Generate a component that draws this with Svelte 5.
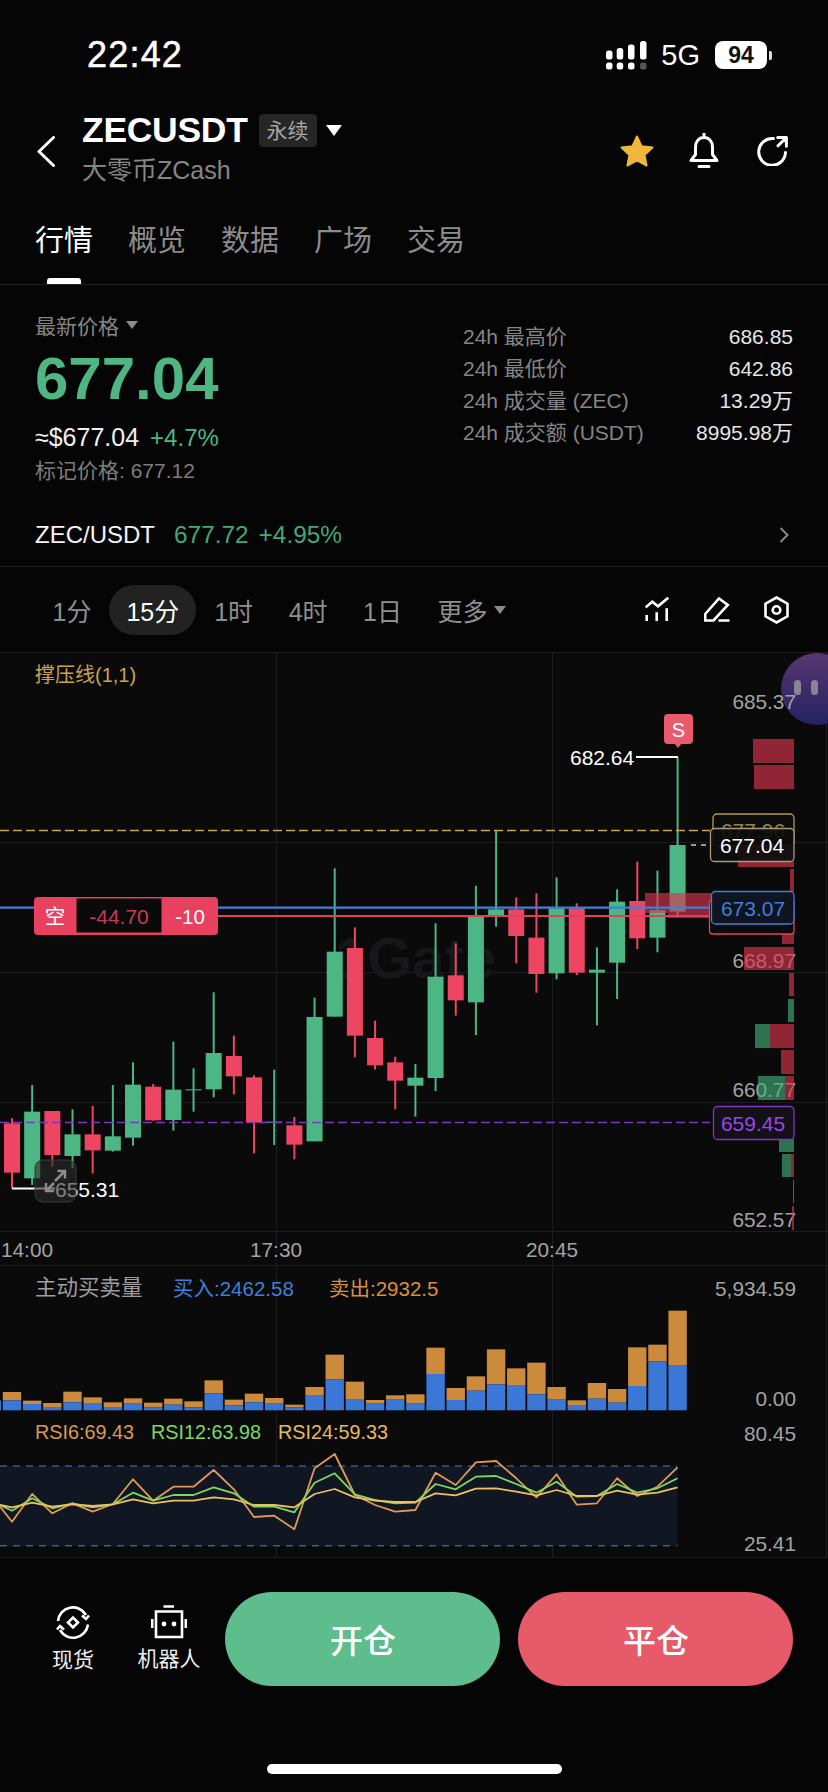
<script>
  const tabs = ['行情', '概览', '数据', '广场', '交易'];
  const stats = [
    ['24h 最高价', '686.85'],
    ['24h 最低价', '642.86'],
    ['24h 成交量 (ZEC)', '13.29万'],
    ['24h 成交额 (USDT)', '8995.98万']
  ];
  const frames = ['1分', '15分', '1时', '4时', '1日'];
  const cx = (i) => 12 + 20.17 * i;

  // wick top, wick bottom, body top, body bottom, rising
  const candleData = [
    [595,805,610,758,0],[495,795,575,775,1],[573,740,573,705,0],[568,745,643,708,1],
    [558,760,643,691,0],[495,695,649,692,1],[427,677,494,653,1],[492,602,500,601,0],
    [365,632,509,600,1],[445,575,508,511,1],[217,532,399,508,1],[347,523,408,469,0],
    [466,700,472,608,0],[449,675,605,608,1],[591,718,616,674,0],[233,664,291,664,1],
    [-155,290,95,290,1],[22,412,84,347,0],[302,449,354,436,0],[410,568,427,482,0],
    [432,590,473,497,1],[10,513,170,474,1],[70,287,166,241,0],[-103,345,-10,247,1],
    [-269,20,-32,-13,1],[-68,130,-32,48,0],[-80,218,53,162,0],[-128,178,-35,160,1],
    [-50,165,-35,158,0],[82,316,149,158,1],[-92,237,-55,128,1],[-175,87,-57,55,0],
    [-148,97,-30,53,1],[-488,-15,-225,-25,1]
  ];
  const py = (v) => 920 + v / 3;
  const candles = candleData.map((c, i) => ({
    x: cx(i),
    wt: py(c[0]),
    wb: py(c[1]),
    bt: py(c[2]),
    bh: Math.max(1, (c[3] - c[2]) / 3),
    cls: c[4] ? 'up' : 'down'
  }));

  // sell top, buy top
  const volumeData = [
    [396,421],[422,432],[429,441],[395,427],[412,429],[427,441],[415,431],[428,442],[416,434],
    [424,442],[361,400],[419,436],[401,427],[414,431],[434,442],[381,405],[284,358],[365,417],
    [420,431],[406,419],[403,431],[263,342],[384,420],[349,392],[268,373],[325,375],[308,403],
    [381,419],[421,435],[369,416],[387,428],[262,378],[254,304],[152,315]
  ];
  const vy = (v) => 1260 + v / 3;
  const volumes = volumeData.map((v, i) => ({ x: cx(i) - 9.2, sell: vy(v[0]), buy: vy(v[1]) }));

  const toLine = (first, rest) =>
    `0,${vy(first)} ` + rest.map((v, i) => `${cx(i).toFixed(1)},${vy(v).toFixed(1)}`).join(' ');
  const rsi6 = toLine(740, [785,702,760,730,755,732,658,722,680,680,630,688,771,767,808,625,582,705,735,755,750,638,675,607,603,655,712,643,734,730,655,708,680,622]);
  const rsi12 = toLine(735, [752,715,745,730,742,733,698,722,705,705,682,700,740,740,757,668,640,703,720,730,728,672,688,650,648,672,698,665,710,708,672,698,685,655]);
  const rsi24 = toLine(735, [742,728,740,733,738,733,718,730,722,722,712,718,735,735,742,702,687,712,722,726,726,700,706,686,685,695,706,690,708,708,692,704,698,682]);

  // y, height, left edge, split (green to the left of it), right edge
  const depth = [
    [739,24,753,753],[765,24,754,754],[847,20,738,738],[869,23,790,790],[893,20,645,645],[913,5,668,668],
    [920,24,782,782],[947,23,744,744],[973,23,789,789],[999,23,788,794],[1024,24,755,770],
    [1050,24,781,781],[1076,24,758,785],[1139,13,779,794],[1154,23,782,791],[1180,23,793,794],[1206,24,792,792]
  ];
</script>

<div class="page">
  <div class="status">
    <span class="clock">22:42</span>
    <div class="status-right">
      <svg class="signal" width="41" height="29" viewBox="0 0 41 29">
        <rect x="0" y="9.5" width="6.5" height="9" rx="2.5" />
        <rect x="10.7" y="7" width="6.5" height="11.5" rx="2.5" />
        <rect x="22" y="3.5" width="6.5" height="15" rx="2.5" />
        <rect x="34" y="0" width="6.5" height="18.5" rx="2.5" />
        <rect x="0" y="21.5" width="6.5" height="7" rx="2.5" />
        <rect x="10.7" y="21.5" width="6.5" height="7" rx="2.5" />
        <rect x="22" y="21.5" width="6.5" height="7" rx="2.5" />
        <rect class="dim" x="34" y="21.5" width="6.5" height="7" rx="2.5" />
      </svg>
      <span class="net">5G</span>
      <span class="battery">94</span>
      <span class="nub"></span>
    </div>
  </div>

  <div class="nav">
    <svg class="back" width="18" height="31" viewBox="0 0 18 31">
      <path d="M16.5 1.5 L2 15.5 L16.5 29.5" />
    </svg>
    <div class="title">
      <div class="title-row">
        <span class="symbol">ZECUSDT</span>
        <span class="badge">永续</span>
        <span class="tri big"></span>
      </div>
      <div class="sub">大零币ZCash</div>
    </div>
    <div class="nav-icons">
      <svg class="fav" width="36" height="34" viewBox="0 0 36 34">
        <path class="star" d="M18 2.5 L22.6 12.3 L33.5 13.6 L25.5 21 L27.6 31.5 L18 26.3 L8.4 31.5 L10.5 21 L2.5 13.6 L13.4 12.3 Z" />
      </svg>
      <svg class="ic bell" width="30" height="36" viewBox="0 0 30 36">
        <path d="M15 4.5 C9.5 4.5 6.5 9 6.5 14 V21.5 L2 27.5 H28 L23.5 21.5 V14 C23.5 9 20.5 4.5 15 4.5 Z M15 .5 V4.5 M10 33.5 H20" />
      </svg>
      <svg class="ic" width="31" height="30" viewBox="0 0 31 30">
        <path d="M16.5 2.6 A13.4 13.4 0 1 0 28.5 16.5 M21 9.8 L29.4 1.5 M20.7 1.5 H29.4 V10.3" />
      </svg>
    </div>
  </div>

  <div class="tabs">
    {#each tabs as tab, i}
      <div class="tab" class:active={i === 0}>{tab}</div>
    {/each}
  </div>

  <section class="stats">
    <div class="stats-top">
      <div class="price-col">
        <div class="latest"><span>最新价格</span><span class="tri small"></span></div>
        <div class="price">677.04</div>
        <div class="approx">≈$677.04<span class="green">+4.7%</span></div>
        <div class="mark">标记价格: 677.12</div>
      </div>
      <div class="stat-col">
        {#each stats as [label, value]}
          <div class="stat"><span class="stat-label">{label}</span><span class="stat-value">{value}</span></div>
        {/each}
      </div>
    </div>
    <div class="pair">
      <span class="pair-name">ZEC/USDT</span>
      <span class="pair-green">677.72</span>
      <span class="pair-green">+4.95%</span>
      <svg class="more" width="10" height="16" viewBox="0 0 10 16"><path d="M1.5 1 L8.5 8 L1.5 15" /></svg>
    </div>
  </section>

  <div class="frames">
    {#each frames as f, i}
      <span class="frame" class:on={i === 1}>{f}</span>
    {/each}
    <span class="frame last">更多<span class="tri small"></span></span>
    <div class="tools">
      <svg class="ic thin" width="25" height="25" viewBox="0 0 25 25">
        <path d="M.7 10.3 L7.3 4.7 L13 9.3 L23.3 .7 M1.7 18 V24 M11.7 15.3 V24 M21.7 11.3 V24" />
      </svg>
      <svg class="ic thin" width="26" height="25" viewBox="0 0 26 25">
        <path d="M1.2 23.5 V17 L15 1.5 L23.8 8 L9.5 23.5 Z M14.5 23.5 H25.5" />
      </svg>
      <svg class="ic thin" width="25" height="28" viewBox="0 0 25 28">
        <path d="M12.5 1.5 L23.5 7.7 V20.3 L12.5 26.5 L1.5 20.3 V7.7 Z" />
        <circle cx="12.5" cy="14" r="3.8" />
      </svg>
    </div>
  </div>

  <svg class="chart" width="828" height="906" viewBox="0 652 828 906">
    <defs>
      <linearGradient id="blob" x1="0" y1="0" x2="0" y2="1">
        <stop offset="0" stop-color="#5d3a78" />
        <stop offset="1" stop-color="#25256a" />
      </linearGradient>
    </defs>

    <!-- grid -->
    {#each [652.5, 842.5, 972.5, 1102.5, 1231.5, 1265.5, 1557.5] as y}
      <line class="grid" x1="0" x2="828" y1={y} y2={y} />
    {/each}
    {#each [276.5, 552.5, 826.5] as x}
      <line class="grid" x1={x} x2={x} y1="652" y2="1558" />
    {/each}
    <text class="mark-w" x="335" y="978">1Gate</text>

    <text class="legend" x="35" y="675">撑压线(1,1)</text>

    <!-- floating assistant -->
    <circle cx="817" cy="689" r="36" fill="url(#blob)" opacity="0.93" />
    <rect class="pill" x="794" y="680" width="7" height="15" rx="3.5" />
    <rect class="pill" x="811" y="680" width="7" height="15" rx="3.5" />

    <!-- price axis -->
    <text class="ax" x="796" y="701">685.37</text>
    <text class="ax" x="796" y="960">668.97</text>
    <text class="ax" x="796" y="1089">660.77</text>
    <text class="ax" x="796" y="1219">652.57</text>

    <!-- candles -->
    {#each candles as c}
      <line class={'wick ' + c.cls} x1={c.x} x2={c.x} y1={c.wt} y2={c.wb} />
      <rect class={'body ' + c.cls} x={c.x - 8} y={c.bt} width="16" height={c.bh} />
    {/each}

    <!-- depth -->
    {#each depth as d}
      {#if d[3] > d[2]}
        <rect class="dg" x={d[2]} y={d[0]} width={d[3] - d[2]} height={d[1]} />
      {/if}
      {#if d[3] < 794}
        <rect class="dr" x={d[3]} y={d[0]} width={794 - d[3]} height={d[1]} />
      {/if}
    {/each}

    <!-- level lines -->
    <line class="lv-y" x1="0" x2="710" y1="830.5" y2="830.5" />
    <line class="lv-p" x1="0" x2="710" y1="1122.5" y2="1122.5" />
    <line class="lv-b" x1="0" x2="712" y1="907.7" y2="907.7" />
    <line class="lv-r" x1="218" x2="712" y1="916" y2="916" />
    <line class="lv-w" x1="691" x2="710" y1="845" y2="845" />

    <!-- high and low marks -->
    <path class="mk" d="M636 757 H678" />
    <text class="mk-t" x="570" y="757">682.64</text>
    <path class="mk" d="M12 1188.5 H55" />
    <text class="mk-t" x="55" y="1189">655.31</text>
    <rect class="sig" x="664" y="714" width="29" height="30" rx="4" />
    <path class="sig" d="M674 743 L678 748 L682 743 Z" />
    <text class="sig-t" x="678.5" y="729.5">S</text>

    <!-- position tag -->
    <rect class="pos" x="34" y="897" width="184" height="38" rx="4" />
    <rect class="pos-in" x="76.5" y="898.5" width="85" height="34" />
    <text class="pos-t" x="55" y="916">空</text>
    <text class="pos-v" x="119" y="916">-44.70</text>
    <text class="pos-t" x="190" y="916">-10</text>

    <!-- price tags -->
    <rect class="tag tag-y" x="713" y="814" width="81" height="32" rx="4" />
    <text class="tag-t ty" x="753" y="830">677.96</text>
    <rect class="tag tag-w" x="710.5" y="828.5" width="83.5" height="33" rx="4" />
    <text class="tag-t tw" x="752" y="845">677.04</text>
    <rect class="tag tag-r" x="709.5" y="900" width="84.5" height="34" rx="3" />
    <rect class="tag tag-b" x="711.5" y="891.5" width="82.5" height="32.5" rx="4" />
    <text class="tag-t tb" x="753" y="908">673.07</text>
    <rect class="tag tag-p" x="713.5" y="1106.5" width="80.5" height="33" rx="4" />
    <text class="tag-t tp" x="753" y="1123">659.45</text>

    <!-- time axis -->
    <text class="ax mid" x="27" y="1249">14:00</text>
    <text class="ax mid" x="276" y="1249">17:30</text>
    <text class="ax mid" x="552" y="1249">20:45</text>

    <!-- expand button -->
    <rect class="exp" x="35" y="1160" width="41" height="42" rx="8" />
    <path class="exp-a" d="M55 1181 L64 1172 M57.5 1171 H65 V1178.5 M54 1183 L47 1190 M46 1183 V1191 H54" />

    <!-- volume -->
    <text class="vh wh" x="35" y="1288">主动买卖量</text>
    <text class="vh blue" x="173" y="1288">买入:2462.58</text>
    <text class="vh orange" x="329" y="1288">卖出:2932.5</text>
    <text class="ax" x="796" y="1288">5,934.59</text>
    <text class="ax" x="796" y="1398">0.00</text>
    <rect class="bb" x="0" y="1400.5" width="1" height="10" />
    {#each volumes as v}
      <rect class="bs" x={v.x} y={v.sell} width="18.4" height={v.buy - v.sell} />
      <rect class="bb" x={v.x} y={v.buy} width="18.4" height={1410.3 - v.buy} />
    {/each}

    <!-- RSI -->
    <text class="rh r6" x="35" y="1432">RSI6:69.43</text>
    <text class="rh r12" x="151" y="1432">RSI12:63.98</text>
    <text class="rh r24" x="278" y="1432">RSI24:59.33</text>
    <text class="ax" x="796" y="1433">80.45</text>
    <text class="ax" x="796" y="1543">25.41</text>
    <rect class="band" x="0" y="1466" width="677.5" height="80" />
    <line class="band-l" x1="0" x2="677" y1="1466" y2="1466" />
    <line class="band-l" x1="0" x2="677" y1="1545.7" y2="1545.7" />
    <polyline class="ln r6l" points={rsi6} />
    <polyline class="ln r12l" points={rsi12} />
    <polyline class="ln r24l" points={rsi24} />
  </svg>

  <div class="footer">
    <div class="actions">
      <div class="act">
        <svg class="ic thin" width="36" height="35" viewBox="0 0 36 35">
          <path d="M3 16 A15 15 0 0 1 31 10 M34 10.5 L31 14 L27 10.5 M33 19.5 A15 15 0 0 1 5 25 M2 24.5 L5 21 L9 24.5" />
          <path d="M18 12.5 L23 17.5 L18 22.5 L13 17.5 Z" />
        </svg>
        <span>现货</span>
      </div>
      <div class="act">
        <svg class="ic thin" width="36" height="34" viewBox="0 0 36 34">
          <path d="M12.5 1.5 H23 M5 6.5 H31 V32 H5 Z M1.2 14 V23 M34.8 14 V23" />
          <circle class="eye" cx="13" cy="19" r="2.4" />
          <circle class="eye" cx="23" cy="19" r="2.4" />
        </svg>
        <span>机器人</span>
      </div>
    </div>
    <div class="btn open">开仓</div>
    <div class="btn close">平仓</div>
  </div>
  <div class="home"></div>
</div>

<style>
  :global(body) {
    margin: 0;
    background: #050505;
  }
  .page {
    width: 828px;
    height: 1792px;
    overflow: hidden;
    background: #050505;
    color: #fff;
    font-family: "Liberation Sans", "Noto Sans CJK SC", sans-serif;
  }
  svg {
    display: block;
    flex: none;
  }

  .status {
    height: 110px;
    display: flex;
    align-items: center;
    justify-content: space-between;
    padding: 0 56px 0 87px;
    box-sizing: border-box;
  }
  .clock {
    font-size: 36px;
    font-weight: 500;
    letter-spacing: 1.2px;
    -webkit-text-stroke: 0.5px #fff;
  }
  .status-right {
    display: flex;
    align-items: center;
  }
  .signal rect { fill: #fff; }
  .signal .dim { fill: #555; }
  .net {
    font-size: 29px;
    margin: 0 15px 0 14px;
  }
  .battery {
    width: 52px;
    height: 28px;
    background: #fff;
    color: #111;
    border-radius: 8px;
    font-size: 23px;
    font-weight: 700;
    line-height: 28px;
    text-align: center;
  }
  .nub {
    width: 3px;
    height: 9px;
    margin-left: 2px;
    background: #ddd;
    border-radius: 0 2px 2px 0;
  }

  .nav {
    height: 82px;
    display: flex;
    align-items: center;
    padding: 0 40px 0 37px;
  }
  .back path {
    fill: none;
    stroke: #fff;
    stroke-width: 3;
    stroke-linecap: round;
    stroke-linejoin: round;
  }
  .title {
    margin-left: 27px;
    align-self: flex-start;
    padding-top: 2px;
  }
  .title-row {
    display: flex;
    align-items: center;
    height: 36px;
  }
  .symbol {
    font-size: 35.5px;
    font-weight: 700;
    line-height: 36px;
    letter-spacing: -0.3px;
  }
  .badge {
    margin-left: 11px;
    width: 58px;
    height: 33px;
    background: #262626;
    border-radius: 4px;
    color: #a5a5a5;
    font-size: 21px;
    line-height: 33px;
    text-align: center;
  }
  .sub {
    margin-top: 7px;
    font-size: 25px;
    line-height: 30px;
    color: #858585;
  }
  .tri {
    display: inline-block;
    width: 0;
    height: 0;
    border-style: solid;
    border-color: #fff transparent transparent transparent;
  }
  .tri.big {
    margin-left: 9px;
    border-width: 11px 8px 0 8px;
  }
  .tri.small {
    margin-left: 7px;
    border-width: 8px 6px 0 6px;
    border-top-color: #8a8a8a;
  }
  .nav-icons {
    margin-left: auto;
    display: flex;
    align-items: center;
    gap: 38px;
  }
  .fav {
    margin-right: -4px;
  }
  .star {
    fill: #f0b63c;
    stroke: #f0b63c;
    stroke-width: 2;
    stroke-linejoin: round;
  }
  .ic path, .ic circle {
    fill: none;
    stroke: #fff;
    stroke-width: 3;
    stroke-linecap: round;
    stroke-linejoin: round;
  }
  .ic.thin path, .ic.thin circle {
    stroke-width: 2.6;
    stroke-linecap: butt;
    stroke-linejoin: miter;
  }
  .ic.thin .eye {
    fill: #fff;
    stroke: none;
  }

  .tabs {
    height: 93px;
    box-sizing: border-box;
    display: flex;
    gap: 35px;
    padding-left: 35px;
    border-bottom: 1px solid #222;
  }
  .tab {
    position: relative;
    padding-top: 35px;
    font-size: 29px;
    line-height: 29px;
    color: #8c8c8c;
  }
  .tab.active {
    color: #fff;
  }
  .tab.active::after {
    content: "";
    position: absolute;
    left: 12px;
    bottom: 0;
    width: 34px;
    height: 6px;
    background: #fff;
    border-radius: 3px 3px 0 0;
  }

  .stats {
    height: 282px;
    box-sizing: border-box;
    border-bottom: 1px solid #1e1e1e;
    padding: 0 35px;
  }
  .stats-top {
    display: flex;
    justify-content: space-between;
  }
  .price-col {
    padding-top: 28px;
  }
  .latest {
    display: flex;
    align-items: center;
    height: 24px;
    font-size: 21px;
    color: #868686;
  }
  .price {
    margin-top: 12px;
    font-size: 60px;
    font-weight: 700;
    line-height: 60px;
    color: #4fb583;
  }
  .approx {
    margin-top: 14px;
    font-size: 25px;
    line-height: 28px;
    color: #f0f0f0;
  }
  .green {
    margin-left: 11px;
    font-size: 24px;
    color: #4fb583;
  }
  .mark {
    margin-top: 6px;
    font-size: 21px;
    line-height: 26px;
    color: #7d7d7d;
  }
  .stat-col {
    width: 330px;
    padding-top: 36px;
  }
  .stat {
    display: flex;
    justify-content: space-between;
    height: 32px;
    line-height: 32px;
    font-size: 21px;
  }
  .stat-label { color: #858585; }
  .stat-value { color: #e6e6e6; }
  .pair {
    margin-top: 36px;
    display: flex;
    align-items: center;
    height: 30px;
    font-size: 24.4px;
  }
  .pair-name {
    font-size: 24px;
    margin-right: 19px;
    color: #f4f4f4;
  }
  .pair-green {
    color: #45a679;
    margin-right: 10px;
  }
  .more {
    margin-left: auto;
    margin-right: 4px;
  }
  .more path {
    fill: none;
    stroke: #888;
    stroke-width: 2;
  }

  .frames {
    height: 85px;
    display: flex;
    align-items: center;
    gap: 0.5px;
    padding: 0 39px 0 35px;
  }
  .frame {
    display: flex;
    align-items: center;
    justify-content: center;
    height: 50px;
    padding: 0 17.5px;
    font-size: 25px;
    color: #8f8f8f;
    border-radius: 25px;
  }
  .frame.on {
    padding: 0 17px;
    background: #222;
    color: #fff;
  }
  .tools {
    margin-left: auto;
    display: flex;
    align-items: center;
    gap: 34px;
  }

  .chart {
    background: #0a0a0b;
  }
  .chart text {
    dominant-baseline: central;
  }
  .grid {
    stroke: #1c1c1e;
    stroke-width: 1;
  }
  .chart .mark-w {
    dominant-baseline: alphabetic;
    font-size: 58px;
    font-weight: 700;
    fill: #171719;
  }
  .legend {
    font-size: 20px;
    fill: #c9a34e;
  }
  .ax {
    font-size: 20.8px;
    fill: #a3a3a3;
    text-anchor: end;
  }
  .ax.mid { text-anchor: middle; }
  .wick { stroke-width: 2; }
  .wick.up { stroke: #4cb784; }
  .wick.down { stroke: #ee4563; }
  .body.up { fill: #4cb784; }
  .body.down { fill: #ee4563; }
  .dr { fill: #d8344f; opacity: 0.65; }
  .dg { fill: #44b37c; opacity: 0.62; }
  .lv-y { stroke: #c9a34e; stroke-width: 1.5; stroke-dasharray: 9 4; }
  .lv-p { stroke: #7d35c4; stroke-width: 1.5; stroke-dasharray: 9 4; }
  .lv-b { stroke: #3f80d8; stroke-width: 2.2; }
  .lv-r { stroke: #e0405f; stroke-width: 2; }
  .lv-w { stroke: #ccc; stroke-width: 1.5; stroke-dasharray: 5 5; }
  .mk { fill: none; stroke: #fff; stroke-width: 1.8; }
  .mk-t {
    font-size: 21px;
    fill: #fff;
  }
  .sig { fill: #e85a6c; }
  .sig-t {
    font-size: 20px;
    fill: #fff;
    text-anchor: middle;
  }
  .pos { fill: #e8405f; }
  .pos-in { fill: #0a0a0b; }
  .pos-t {
    font-size: 20.5px;
    fill: #fff;
    text-anchor: middle;
  }
  .pos-v {
    font-size: 21px;
    fill: #c73a58;
    text-anchor: middle;
  }
  .tag { fill: #0c0c0d; stroke-width: 1.3; }
  .tag-y { stroke: #b39a55; }
  .tag-w { stroke: #a59c80; fill: #0d0d0d; fill-opacity: 0.92; }
  .tag-r { stroke: #e0405f; }
  .tag-b { stroke: #3f80d8; fill: #0e1420; }
  .tag-p { stroke: #7d35c4; fill: #141018; }
  .tag-t {
    font-size: 21px;
    text-anchor: middle;
  }
  .ty { fill: #9a8546; }
  .tw { fill: #fff; }
  .tb { fill: #3f80d8; }
  .tp { fill: #9a46ea; }
  .exp {
    fill: #2c2c2c;
    fill-opacity: 0.6;
    stroke: #3a3a3a;
    stroke-width: 1;
  }
  .exp-a {
    fill: none;
    stroke: #8c8c8c;
    stroke-width: 2.5;
  }
  .vh { font-size: 20.5px; }
  .wh { fill: #9e9e9e; font-size: 21.5px; }
  .blue { fill: #3f80d8; }
  .orange { fill: #d8903e; }
  .bs { fill: #cc8a3c; }
  .bb { fill: #3a77d6; }
  .rh { font-size: 19.8px; }
  .r6 { fill: #d89a50; }
  .r12 { fill: #7fd860; }
  .r24 { fill: #e6bb5c; }
  .band { fill: #101722; }
  .band-l {
    stroke: #3d5a88;
    stroke-width: 1.5;
    stroke-dasharray: 7 6;
  }
  .ln {
    fill: none;
    stroke-width: 1.8;
    stroke-linejoin: round;
  }
  .r6l { stroke: #e09a55; }
  .r12l { stroke: #7fd860; }
  .r24l { stroke: #f0c060; }
  .pill { fill: #8a8296; }

  .footer {
    height: 128px;
    box-sizing: border-box;
    padding: 34px 34px 0 38px;
    display: flex;
    align-items: flex-start;
    gap: 18px;
  }
  .actions {
    display: flex;
    gap: 26px;
    padding-top: 13px;
    margin-right: 3.4px;
  }
  .act {
    width: 70px;
    display: flex;
    flex-direction: column;
    align-items: center;
    gap: 7px;
    font-size: 21px;
    line-height: 26px;
    color: #eee;
  }
  .btn {
    width: 275px;
    height: 94px;
    border-radius: 47px;
    display: flex;
    align-items: center;
    justify-content: center;
    font-size: 33px;
    font-weight: 500;
    color: #fff;
  }
  .open { background: #5ebd8c; }
  .close { background: #e65a6a; }
  .home {
    width: 295px;
    height: 10px;
    margin: 78px auto 0;
    background: #fff;
    border-radius: 5px;
  }
</style>
